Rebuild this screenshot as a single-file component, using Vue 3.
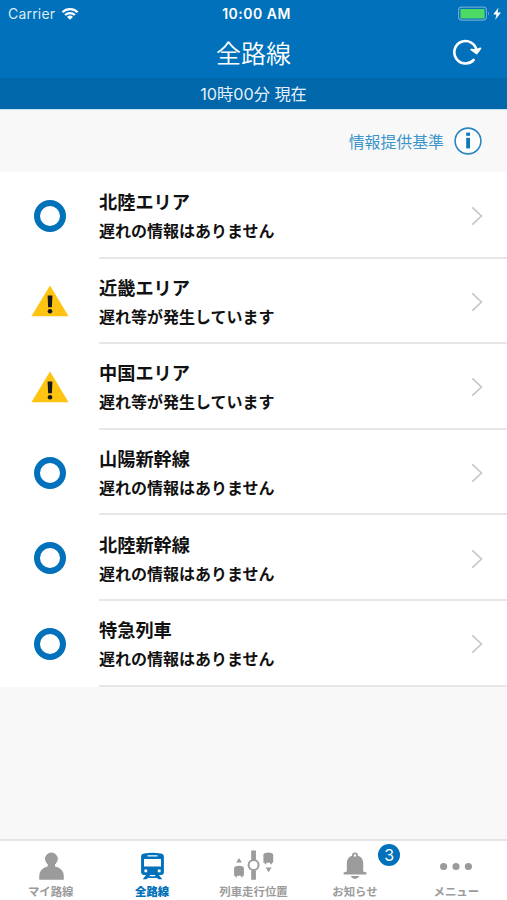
<template>
  <div class="screen">
    <!-- ステータスバー -->
    <div class="status-bar">
      <div class="carrier">
        <span>Carrier</span>
        <svg class="wifi" viewBox="0 0 18 13">
          <path d="M0.6 4.4 A12 12 0 0 1 17.4 4.4 L15.8 6.1 A9.8 9.8 0 0 0 2.2 6.1 Z" />
          <path d="M3.3 7.2 A8.3 8.3 0 0 1 14.7 7.2 L13.1 8.8 A6 6 0 0 0 4.9 8.8 Z" />
          <path d="M6 9.9 A4.4 4.4 0 0 1 12 9.9 L9 12.8 Z" />
        </svg>
      </div>
      <div class="clock">10:00 AM</div>
      <div class="power">
        <svg class="battery" viewBox="0 0 44 16">
          <rect class="battery-frame" x="0.6" y="1.1" width="27.8" height="13" rx="3" />
          <rect class="battery-level" x="2.4" y="3" width="24.2" height="9.4" rx="1" />
          <path class="battery-cap" d="M30 5.5 Q32 7.6 30 9.8 Z" />
          <path class="bolt" d="M40.5 1.6 L35.2 8.6 H38.4 L37.3 13.8 L43 6.6 H39.6 Z" />
        </svg>
      </div>
    </div>

    <!-- ナビゲーション -->
    <header class="nav">
      <h1 class="title">全路線</h1>
      <button class="reload" aria-label="更新">
        <svg viewBox="0 0 30 28">
          <path class="reload-arc" d="M21.6 22 A11.2 11.2 0 1 1 24.6 12.6" />
          <path class="reload-head" d="M19.2 11.6 L24.2 12.2 L28.4 10.4 L24.7 15.6 Z" />
        </svg>
      </button>
    </header>
    <div class="updated">10時00分 現在</div>

    <!-- 情報提供基準 -->
    <div class="criteria">
      <span>情報提供基準</span>
      <svg class="info" viewBox="0 0 28 28">
        <circle class="info-ring" cx="14" cy="14" r="12.9" />
        <rect x="12.2" y="5.6" width="3.8" height="3.2" />
        <rect x="12.2" y="10.8" width="3.8" height="10.6" />
      </svg>
    </div>

    <!-- 路線一覧 -->
    <ul class="lines">
      <li v-for="line in lines" :key="line.name" class="line">
        <div class="line-icon">
          <svg v-if="line.delayed" class="warning" viewBox="0 0 38 32">
            <path class="warning-back" d="M19 0.4 L37.6 31.2 H0.4 Z" />
            <path d="M16.6 10.5 H21.4 L20.9 22.3 H17.1 Z" />
            <circle cx="19" cy="26.2" r="2.3" />
          </svg>
          <div v-else class="normal"></div>
        </div>
        <div class="line-body">
          <div class="line-text">
            <div class="line-name">{{ line.name }}</div>
            <div class="line-message">{{ line.delayed ? delayedText : normalText }}</div>
          </div>
          <svg class="chevron" viewBox="0 0 12 20">
            <path d="M1.3 1.3 L10.4 10 L1.3 18.7" />
          </svg>
        </div>
      </li>
    </ul>

    <!-- タブバー -->
    <nav class="tabs">
      <a v-for="tab in tabs" :key="tab.id" class="tab" :class="{ active: tab.id === activeTab }">
        <svg v-if="tab.id === 'my'" class="tab-icon" viewBox="0 0 44 32">
          <circle cx="22.4" cy="9" r="6.4" />
          <path d="M19 13 H25.8 L26.2 16.6 Q34.6 18.6 34.8 26.2 V29.8 H10.2 V26.2 Q10.4 18.6 18.6 16.6 Z" />
        </svg>
        <svg v-else-if="tab.id === 'all'" class="tab-icon" viewBox="0 0 44 32">
          <path
            fill-rule="evenodd"
            d="M14 3.6 Q22.5 2 31 3.6 Q33.9 4.1 33.9 7 V22 Q33.9 25 30.9 25 H14.1 Q11.1 25 11.1 22 V7 Q11.1 4.1 14 3.6 Z M17.5 5.2 V6.4 H27.5 V5.2 Z M14 9 V16.4 H31 V9 Z M14.4 19.4 V22.2 H17.2 V19.4 Z M27.8 19.4 V22.2 H30.6 V19.4 Z"
          />
          <path d="M16.5 24.6 H20.7 L19.2 26.2 H25.8 L24.3 24.6 H28.5 L32.3 29.2 H28.4 L27.1 28 H17.9 L16.6 29.2 H12.7 Z" />
        </svg>
        <svg v-else-if="tab.id === 'position'" class="tab-icon" viewBox="0 0 44 32">
          <path d="M19.2 0.4 H23.9 V10 H19.2 Z M19.2 20.5 H23.9 V29.8 H19.2 Z" />
          <circle class="station" cx="21.6" cy="15.1" r="5" />
          <path d="M7 8 L9.9 12.6 H4.1 Z" />
          <path d="M3.7 16.2 Q7 15.4 10.3 16.2 Q11.9 16.6 11.9 18.3 V25.8 H10.6 V27.2 H9 V25.8 H5 V27.2 H3.4 V25.8 H2.1 V18.3 Q2.1 16.6 3.7 16.2 Z" />
          <path d="M33 3 Q36.3 2.2 39.6 3 Q41.2 3.4 41.2 5.1 V12.8 H39.9 V14.2 H38.3 V12.8 H34.3 V14.2 H32.7 V12.8 H31.4 V5.1 Q31.4 3.4 33 3 Z" />
          <path d="M36.6 22.2 L33.6 17.5 H39.6 Z" />
        </svg>
        <svg v-else-if="tab.id === 'news'" class="tab-icon" viewBox="0 0 44 32">
          <path d="M13.8 21.4 V13.5 Q13.8 7.5 19 5.8 Q18.8 2.6 22 2.6 Q25.2 2.6 25 5.8 Q30.2 7.5 30.2 13.5 V21.4 L33.4 22.4 V24.4 H10.6 V22.4 Z" />
          <path d="M17.6 26 H26.4 Q25 28.9 22 28.9 Q19 28.9 17.6 26 Z" />
          <circle class="bell-hole" cx="22" cy="5.5" r="1.2" />
        </svg>
        <svg v-else class="tab-icon" viewBox="0 0 44 32">
          <circle cx="9.6" cy="16.5" r="3.6" />
          <circle cx="22" cy="16.5" r="3.6" />
          <circle cx="34.4" cy="16.5" r="3.6" />
        </svg>
        <span class="tab-label">{{ tab.label }}</span>
        <span v-if="tab.badge" class="badge">{{ tab.badge }}</span>
      </a>
    </nav>
  </div>
</template>

<script setup>
import { ref } from 'vue'

// 運行状況の文言
const normalText = '遅れの情報はありません'
const delayedText = '遅れ等が発生しています'

// 路線一覧
const lines = ref([
  { name: '北陸エリア', delayed: false },
  { name: '近畿エリア', delayed: true },
  { name: '中国エリア', delayed: true },
  { name: '山陽新幹線', delayed: false },
  { name: '北陸新幹線', delayed: false },
  { name: '特急列車', delayed: false }
])

// タブ
const activeTab = ref('all')
const tabs = [
  { id: 'my', label: 'マイ路線' },
  { id: 'all', label: '全路線' },
  { id: 'position', label: '列車走行位置' },
  { id: 'news', label: 'お知らせ', badge: 3 },
  { id: 'menu', label: 'メニュー' }
]
</script>

<style>
body {
  margin: 0;
}
</style>

<style scoped>
.screen {
  display: flex;
  flex-direction: column;
  height: 100vh;
  overflow: hidden;
  background: #f8f8f8;
  font-family: Inter, 'Noto Sans CJK JP', sans-serif;
  color: #111;
}

svg {
  display: block;
}

/* ステータスバー */
.status-bar {
  display: grid;
  grid-template-columns: 1fr auto 1fr;
  align-items: center;
  height: 28px;
  padding: 0 5px 0 8px;
  background: #0071ba;
  color: #fff;
  font-size: 14px;
  line-height: 28px;
}

.carrier {
  display: flex;
  align-items: center;
  gap: 6px;
  color: #dcebf6;
  letter-spacing: 0.2px;
}

.wifi {
  width: 18px;
  height: 13px;
  margin-top: -2px;
  fill: #fff;
}

.clock {
  padding-left: 3px;
  font-weight: 600;
  letter-spacing: 0.5px;
}

.power {
  display: flex;
  justify-content: flex-end;
}

.battery {
  width: 44px;
  height: 16px;
  margin-top: -1px;
}

.battery-frame {
  fill: none;
  stroke: #6ba9d3;
  stroke-width: 1.1;
}

.battery-level {
  fill: #4cd964;
}

.battery-cap {
  fill: #6ba9d3;
}

.bolt {
  fill: #fff;
}

/* ナビゲーション */
.nav {
  display: grid;
  grid-template-columns: 1fr auto 1fr;
  align-items: center;
  height: 50px;
  background: #0071ba;
  color: #fff;
}

.title {
  grid-column: 2;
  margin: 0;
  padding-top: 3px;
  font-size: 25px;
  font-weight: 350;
  line-height: 47px;
}

.reload {
  justify-self: end;
  margin: 0 25px 2px 0;
  padding: 0;
  border: 0;
  background: none;
}

.reload svg {
  width: 30px;
  height: 28px;
}

.reload-arc {
  fill: none;
  stroke: #fff;
  stroke-width: 2.6;
  stroke-linecap: round;
}

.reload-head {
  fill: #fff;
  stroke: #fff;
  stroke-width: 1.8;
  stroke-linejoin: round;
}

.updated {
  height: 31px;
  background: #0067ab;
  border-bottom: 1px solid #c9dfee;
  color: #e6f0f8;
  font-size: 16.2px;
  line-height: 33px;
  text-align: center;
}

/* 情報提供基準 */
.criteria {
  display: flex;
  align-items: center;
  justify-content: flex-end;
  gap: 10px;
  height: 62px;
  padding-right: 25px;
  color: #3b96c9;
  font-size: 15.9px;
}

.info {
  width: 28px;
  height: 28px;
  fill: #0f78b8;
}

.info-ring {
  fill: #fff;
  stroke: #2a87c0;
  stroke-width: 1.6;
}

/* 路線一覧 */
.lines {
  margin: 0;
  padding: 1px 0 0;
  list-style: none;
  background: linear-gradient(#fff 4px, transparent 4px);
}

.line {
  display: flex;
  height: 85.6px;
  background: #fff;
}

.line-icon {
  display: flex;
  align-items: center;
  justify-content: center;
  width: 99px;
}

.normal {
  box-sizing: border-box;
  width: 32px;
  height: 32px;
  border: 6px solid #0071ba;
  border-radius: 50%;
}

.warning {
  width: 38px;
  height: 32px;
  fill: #16181c;
}

.warning-back {
  fill: #ffc412;
}

.line-body {
  display: flex;
  flex: 1;
  align-items: center;
  justify-content: space-between;
  box-sizing: border-box;
  padding-right: 24px;
  border-bottom: 2px solid #e7e7e8;
}

.line-text {
  padding-top: 4px;
  font-weight: 700;
}

.line-name {
  font-size: 18.2px;
  line-height: 29px;
}

.line-message {
  font-size: 16px;
  line-height: 28px;
}

.chevron {
  width: 12px;
  height: 20px;
  margin-top: 3px;
  fill: none;
  stroke: #c7c7cc;
  stroke-width: 1.7;
}

/* タブバー */
.tabs {
  display: flex;
  box-sizing: border-box;
  height: 61px;
  margin-top: auto;
  border-top: 2px solid #e5e5e5;
  background: #fff;
}

.tab {
  position: relative;
  display: flex;
  flex: 1;
  flex-direction: column;
  align-items: center;
  padding-top: 9px;
  color: #9b9b9b;
}

.tab.active {
  color: #0071ba;
}

.tab-icon {
  flex: none;
  width: 44px;
  height: 32px;
  fill: currentColor;
}

.station {
  fill: #fff;
  stroke: currentColor;
  stroke-width: 2;
}

.bell-hole {
  fill: #fff;
}

.tab-label {
  padding-top: 2px;
  font-size: 11.4px;
  font-weight: 700;
  line-height: 16px;
  white-space: nowrap;
}

.active .tab-label {
  font-weight: 900;
}

.badge {
  position: absolute;
  top: 3px;
  left: 74px;
  width: 22px;
  height: 22px;
  border-radius: 50%;
  background: #0071ba;
  color: #fff;
  font-size: 16px;
  line-height: 22px;
  text-align: center;
}
</style>
